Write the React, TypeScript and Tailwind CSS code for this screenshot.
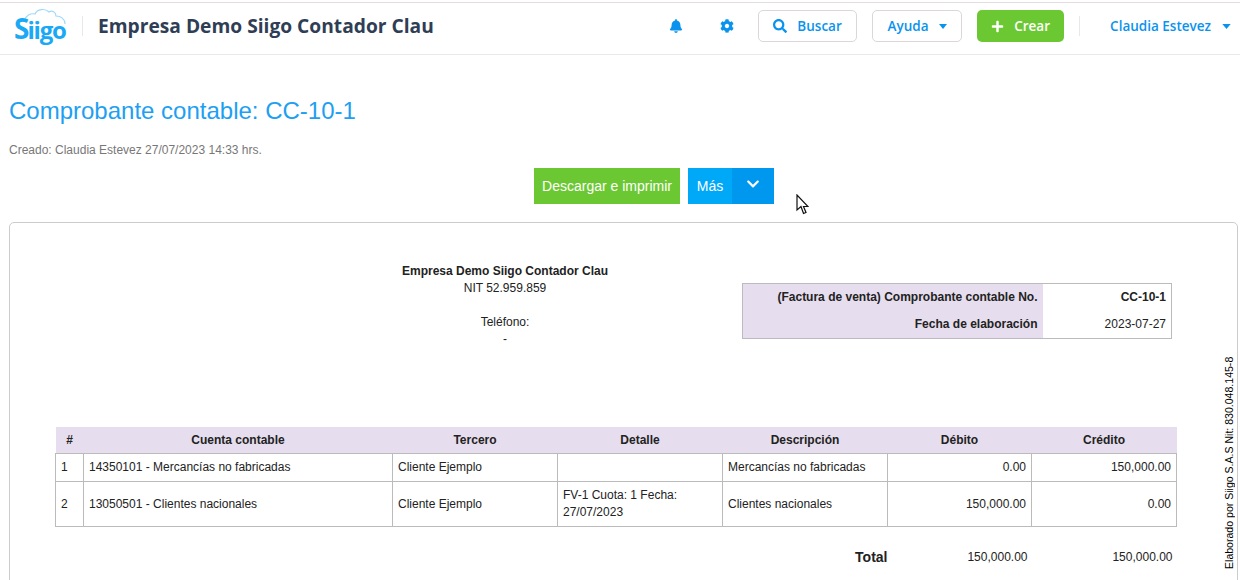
import React from 'react';
import { FaBell, FaCog, FaSearch, FaPlus, FaChevronDown } from 'react-icons/fa';

const Caret = ({ className }: { className: string }) => (
  <svg viewBox="0 0 10 6" className={className}>
    <path d="M0 0h10L5 6z" fill="currentColor" />
  </svg>
);

const Logo = () => (
  <div className="relative w-[52px] h-[36px] shrink-0">
    <svg viewBox="0 0 52 36" className="absolute inset-0 w-[52px] h-[36px]" fill="none">
      <path d="M11 12C12 7 17 5 21 6 23 1 31 0 35 4 38 2 42 4 42 8 47 8 51 11 51 16" stroke="#9fd9fb" strokeWidth="1.2" />
    </svg>
    <span className="absolute left-0 top-[4px] flex items-baseline font-['Open_Sans'] font-bold text-[#1ba8f5] leading-[32px] whitespace-nowrap">
      <span className="text-[28px] tracking-[-2px]">S</span>
      <span className="text-[24px] tracking-[-1.2px]">iigo</span>
    </span>
  </div>
);

const thClass = 'font-bold text-center h-[26px] p-0';
const tdClass = 'border border-[#bbb] px-[5px]';

export default function App() {
  return (
    <div className="w-[1240px] h-[580px] overflow-hidden bg-white relative font-['Liberation_Sans',sans-serif] text-[12px] text-[#222]">
      {/* Header */}
      <header className="mt-[2px] h-[53px] pb-[5px] border-t border-t-[#e2dcdf] border-b border-b-[#eaeaea] flex items-center">
        <div className="ml-[14px] mr-[16px]"><Logo /></div>
        <div className="w-px h-[20px] bg-[#e8e8e8]" />
        <h1 className="ml-[15px] font-['Open_Sans',sans-serif] font-bold text-[19.2px] text-[#2f3e55] whitespace-nowrap">Empresa Demo Siigo Contador Clau</h1>
        <div className="flex-1" />
        <div className="flex items-center font-['Open_Sans',sans-serif] font-semibold text-[13.5px] text-[#0a93ee]">
          <FaBell className="w-[14px] h-[14px]" />
          <FaCog className="w-[14px] h-[14px] ml-[37px]" />
          <button className="ml-[24px] w-[99px] h-[32px] border border-[#dcd6da] rounded-[5px] flex items-center justify-center gap-[10px]">
            <FaSearch className="w-[14px] h-[14px]" />Buscar
          </button>
          <button className="ml-[15px] w-[90px] h-[32px] border border-[#dcd6da] rounded-[5px] flex items-center justify-center gap-[10px]">
            Ayuda<Caret className="w-[8px] h-[5px]" />
          </button>
          <button className="ml-[15px] w-[87px] h-[32px] bg-[#6cc832] text-white rounded-[5px] flex items-center justify-center gap-[10px]">
            <FaPlus className="w-[13px] h-[13px]" />Crear
          </button>
          <div className="ml-[15px] w-px h-[20px] bg-[#e8e8e8]" />
          <span className="ml-[30px] whitespace-nowrap">Claudia Estevez</span>
          <Caret className="ml-[11px] mr-[9px] w-[9px] h-[5px]" />
        </div>
      </header>

      <main className="pl-[9px] pr-[2px]">
        {/* Title */}
        <h2 className="mt-[42px] text-[24px] leading-[28px] text-[#1e9ff2]">Comprobante contable: CC-10-1</h2>
        <p className="mt-[18px] text-[12px] leading-[14px] text-[#777]">Creado: Claudia Estevez 27/07/2023 14:33 hrs.</p>

        <div className="mt-[11px] ml-[525px] flex gap-[8px]">
          <button className="w-[146px] h-[36px] bg-[#6cc832] text-white text-[14px]">Descargar e imprimir</button>
          <div className="flex h-[36px] text-white text-[14px]">
            <button className="w-[44px] bg-[#00a8f8]">Más</button>
            <button className="w-[42px] bg-[#0098ee] flex justify-center pt-[9px]">
              <FaChevronDown className="w-[14px] h-[14px]" />
            </button>
          </div>
        </div>

        {/* Document */}
        <section className="mt-[18px] h-[400px] border border-[#ccc] rounded-[5px] relative">
          <div className="flex mt-[40px]">
            <div className="w-[732px] pl-[258px] text-center leading-[16px]">
              <p className="font-bold">Empresa Demo Siigo Contador Clau</p>
              <p className="mt-[1px]">NIT 52.959.859</p>
              <p className="mt-[18px]">Teléfono:</p>
              <p className="mt-[1px]">-</p>
            </div>
            <table className="mt-[20px] border-collapse w-[430px] h-[56px] border border-[#bbb] table-fixed">
              <tbody>
                <tr className="h-[27px]">
                  <td className="w-[300px] bg-[#e6deee] text-right font-bold pr-[5px]">(Factura de venta) Comprobante contable No.</td>
                  <td className="text-right font-bold pr-[5px]">CC-10-1</td>
                </tr>
                <tr className="h-[28px]">
                  <td className="bg-[#e6deee] text-right font-bold pr-[5px]">Fecha de elaboración</td>
                  <td className="text-right pr-[5px]">2023-07-27</td>
                </tr>
              </tbody>
            </table>
          </div>

          <table className="mt-[80px] ml-[45px] w-[1121px] border-collapse table-fixed">
            <thead>
              <tr className="bg-[#e6deee]">
                <th className={`${thClass} w-[28px]`}>#</th>
                <th className={`${thClass} w-[309px]`}>Cuenta contable</th>
                <th className={`${thClass} w-[165px]`}>Tercero</th>
                <th className={`${thClass} w-[165px]`}>Detalle</th>
                <th className={`${thClass} w-[165px]`}>Descripción</th>
                <th className={`${thClass} w-[144px]`}>Débito</th>
                <th className={`${thClass} w-[145px]`}>Crédito</th>
              </tr>
            </thead>
            <tbody>
              <tr className="h-[28px]">
                <td className={tdClass}>1</td>
                <td className={tdClass}>14350101 - Mercancías no fabricadas</td>
                <td className={tdClass}>Cliente Ejemplo</td>
                <td className={tdClass}></td>
                <td className={tdClass}>Mercancías no fabricadas</td>
                <td className={`${tdClass} text-right`}>0.00</td>
                <td className={`${tdClass} text-right`}>150,000.00</td>
              </tr>
              <tr className="h-[45px]">
                <td className={tdClass}>2</td>
                <td className={tdClass}>13050501 - Clientes nacionales</td>
                <td className={tdClass}>Cliente Ejemplo</td>
                <td className={`${tdClass} leading-[17px]`}>FV-1 Cuota: 1 Fecha: 27/07/2023</td>
                <td className={tdClass}>Clientes nacionales</td>
                <td className={`${tdClass} text-right`}>150,000.00</td>
                <td className={`${tdClass} text-right`}>0.00</td>
              </tr>
              <tr className="h-[62px]">
                <td colSpan={5} className="text-right font-bold text-[14px] pt-[1px] pr-0">Total</td>
                <td className="text-right pr-[4px]">150,000.00</td>
                <td className="text-right pr-[4px]">150,000.00</td>
              </tr>
            </tbody>
          </table>

          <div className="absolute left-[1213px] top-[132px] h-[214px] [writing-mode:vertical-rl] rotate-180 text-[10.56px] text-black whitespace-nowrap leading-[12px]">
            Elaborado por Siigo S.A.S Nit: 830.048.145-8
          </div>
        </section>
      </main>

      {/* Mouse pointer */}
      <svg viewBox="0 0 13 21" className="absolute left-[796px] top-[194px] w-[13px] h-[21px]">
        <path d="M1 1v15l4-3.5L7.5 19.5l2.5-1-2.5-6H12z" fill="#fff" stroke="#111" strokeWidth="1.2" />
      </svg>
    </div>
  );
}
